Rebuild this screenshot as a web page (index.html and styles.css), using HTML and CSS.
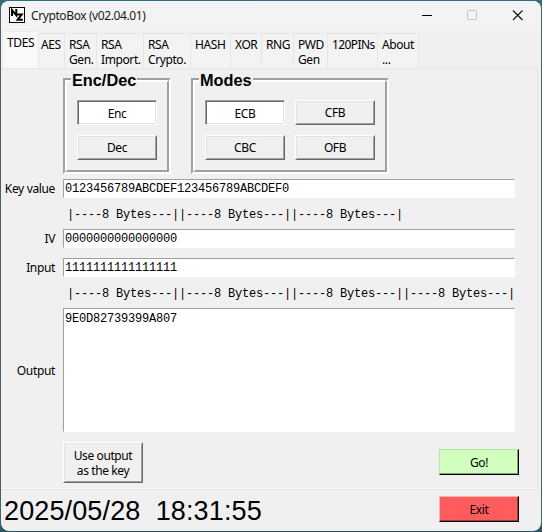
FILE: index.html
```html
<!DOCTYPE html>
<html lang="en">
<head>
<meta charset="utf-8">
<title>CryptoBox (v02.04.01)</title>
<link rel="stylesheet" href="styles.css">
</head>
<body>
<div class="window">
  <header class="titlebar">
    <svg class="logo" width="16" height="16" viewBox="0 0 16 16"><rect x=".5" y=".5" width="15" height="15" fill="#fff" stroke="#000"/><path d="M3 9V3L7.3 8.3V2" fill="none" stroke="#000" stroke-width="2"/><path d="M7.3 7.5H12.7L8.6 12.8H13.8" fill="none" stroke="#000" stroke-width="2"/></svg>
    <h1>CryptoBox (v02.04.01)</h1>
    <svg class="controls" width="102" height="14" viewBox="0 0 102 14" fill="none"><path d="M0 7.5H10" stroke="#000"/><rect x="45.5" y="2.5" width="9" height="9" rx="1" stroke="#c3c3c3"/><path d="M91 2.5L100.5 12M100.5 2.5L91 12" stroke="#111" stroke-width="1.1"/></svg>
  </header>
  <nav class="tabs">
    <div class="tab active w-tdes">TDES</div>
    <div class="tab w-aes">AES</div>
    <div class="tab w-gen">RSA<br>Gen.</div>
    <div class="tab w-imp">RSA<br>Import.</div>
    <div class="tab w-cry">RSA<br>Crypto.</div>
    <div class="tab w-hash">HASH</div>
    <div class="tab w-xor">XOR</div>
    <div class="tab w-rng">RNG</div>
    <div class="tab w-pwd">PWD<br>Gen</div>
    <div class="tab w-pins">120PINs</div>
    <div class="tab last w-about">About<br>...</div>
  </nav>
  <main class="pane">
    <div class="groups">
      <section class="group"><h2>Enc/Dec</h2><div class="options one">
        <button class="btn on">Enc</button>
        <button class="btn">Dec</button>
      </div></section>
      <section class="group"><h2>Modes</h2><div class="options two">
        <button class="btn on">ECB</button><button class="btn">CFB</button>
        <button class="btn">CBC</button><button class="btn">OFB</button>
      </div></section>
    </div>
    <div class="form">
      <span class="label">Key value</span><div class="entry">0123456789ABCDEF123456789ABCDEF0</div>
      <pre class="ruler">|----8 Bytes---||----8 Bytes---||----8 Bytes---|</pre>
      <span class="label">IV</span><div class="entry">0000000000000000</div>
      <span class="label input-row">Input</span><div class="entry input-row">1111111111111111</div>
      <pre class="ruler">|----8 Bytes---||----8 Bytes---||----8 Bytes---||----8 Bytes---|</pre>
      <span class="label">Output</span><div class="entry output">9E0D82739399A807</div>
    </div>
    <div class="actions">
      <button class="btn use">Use output<br>as the key</button>
      <button class="btn go">Go!</button>
    </div>
  </main>
  <footer class="status">
    <pre class="clock">2025/05/28  18:31:55</pre>
    <button class="btn exit">Exit</button>
  </footer>
</div>
</body>
</html>
```
FILE: styles.css
```css
* { box-sizing: border-box; }
body {
  margin: 0;
  width: 542px;
  height: 532px;
  padding: 1px;
  overflow: hidden;
  background: linear-gradient(#2d7084, #46636b 8px, #46636b 522px, #1f5366);
  font: 12px/15px "Noto Sans", sans-serif;
  letter-spacing: -0.4px;
  color: #000;
}
.window {
  width: 540px;
  height: 530px;
  border-radius: 8px;
  overflow: hidden;
  background: #f0f0f0;
  display: flex;
  flex-direction: column;
}
.titlebar {
  height: 30px;
  flex: none;
  background: #f3f3f3;
  display: flex;
  align-items: center;
  padding: 0 17px 2px 8px;
}
.titlebar h1 {
  margin: 1px auto 0 6px;
  font-size: 12px;
  font-weight: 400;
  letter-spacing: -0.4px;
  color: #1a1a1a;
}
.tabs {
  height: 37px;
  flex: none;
  display: flex;
  align-items: flex-end;
  padding-left: 1px;
}
.tab {
  height: 35px;
  padding: 3px 0 0 4px;
  border-top: 1px solid #e5e5e5;
  border-left: 1px solid #e5e5e5;
  background: #f3f3f3;
  white-space: nowrap;
  line-height: 15px;
}
.tab.last { border-right: 1px solid #e5e5e5; }
.tab.active {
  height: 38px;
  margin-bottom: -1px;
  background: #f9f9f9;
  border-color: #ececec;
}
.w-tdes { width: 36px; }
.w-aes { width: 26px; padding-left: 2px; }
.w-gen { width: 32px; }
.w-imp { width: 47px; }
.w-cry { width: 47px; }
.w-hash { width: 40px; }
.w-xor { width: 31px; }
.w-rng { width: 32px; }
.w-pwd { width: 34px; }
.w-pins { width: 50px; letter-spacing: -0.6px; }
.w-about { width: 42px; }
.pane {
  height: 422px;
  flex: none;
  margin: 0 3px 0 1px;
  border: 1px solid #e5e5e5;
  border-left: 0;
  box-shadow: inset 0 -1px #f9f9f9;
}
.groups {
  display: flex;
  gap: 20px;
  padding: 9px 0 0 61px;
}
.group {
  height: 96px;
  border: 2px solid;
  border-color: #a0a0a0 #fff #fff #a0a0a0;
}
.options {
  height: 92px;
  border: 2px solid;
  border-color: #fff #a0a0a0 #a0a0a0 #fff;
  display: grid;
  grid-auto-rows: 25px;
  gap: 10px;
  padding: 18px 10px 0;
}
.one { grid-template-columns: 80px; }
.two { grid-template-columns: 80px 80px; }
.group h2 {
  width: max-content;
  height: 18px;
  margin: -9px 0 -9px 6px;
  padding: 0 1px;
  position: relative;
  background: #f0f0f0;
  font: bold 16.3px/18px "Liberation Sans", sans-serif;
  letter-spacing: 0;
}
.btn {
  width: 80px;
  height: 25px;
  margin: 0;
  padding: 0;
  border: 1px solid;
  border-color: #fff #696969 #696969 #fff;
  box-shadow: inset 1px 1px #e3e3e3, inset -1px -1px #a0a0a0;
  background: #f0f0f0;
  color: #000;
  font: inherit;
  letter-spacing: inherit;
}
.btn.on {
  background: #fff;
  border-color: #a0a0a0 #fff #fff #a0a0a0;
  box-shadow: inset 1px 1px #696969, inset -1px -1px #e3e3e3;
  padding: 2px 0 0;
}
.form {
  display: grid;
  grid-template-columns: 53px 452px;
  grid-template-rows: 19px 31px 19px 10px 19px 31px 124px;
  column-gap: 8px;
  padding-top: 5px;
}
.label {
  grid-column: 1;
  align-self: center;
  text-align: right;
  letter-spacing: -0.35px;
}
.entry {
  grid-column: 2;
  border: 1px solid #fff;
  border-top-color: #a0a0a0;
  border-left-color: #a0a0a0;
  background: #fff;
  padding: 2px 1px 0;
  font: 12px/14px "Liberation Mono", monospace;
  letter-spacing: -0.2px;
}
.input-row { grid-row: 5; }
.output { padding-top: 3px; }
.ruler {
  grid-column: 2;
  margin: 0;
  padding: 10px 0 0 4px;
  font: 12px/14px "Liberation Mono", monospace;
  letter-spacing: -0.2px;
}
.input-row ~ .ruler { grid-row: 6; }
.input-row ~ .label:not(.input-row), .output { grid-row: 7; }
.actions {
  display: flex;
  justify-content: space-between;
  padding: 10px 18px 0 61px;
}
.use { height: 41px; }
.go, .exit { height: 26px; }
.go {
  margin-top: 7px;
  background: #d0ffbf;
  border-color: #b9e3aa #000 #000 #b9e3aa;
  box-shadow: inset -1px -1px #829f77;
}
.exit {
  background: #ff5d5d;
  border-color: #ffb0b0 #000 #000 #ffb0b0;
  box-shadow: inset -1px -1px #9f3a3a;
}
.status {
  display: flex;
  justify-content: space-between;
  padding: 6px 22px 0 3px;
}
.clock {
  margin: 0;
  font: 27px/31px "Liberation Sans", sans-serif;
  letter-spacing: 0.13px;
}
```
